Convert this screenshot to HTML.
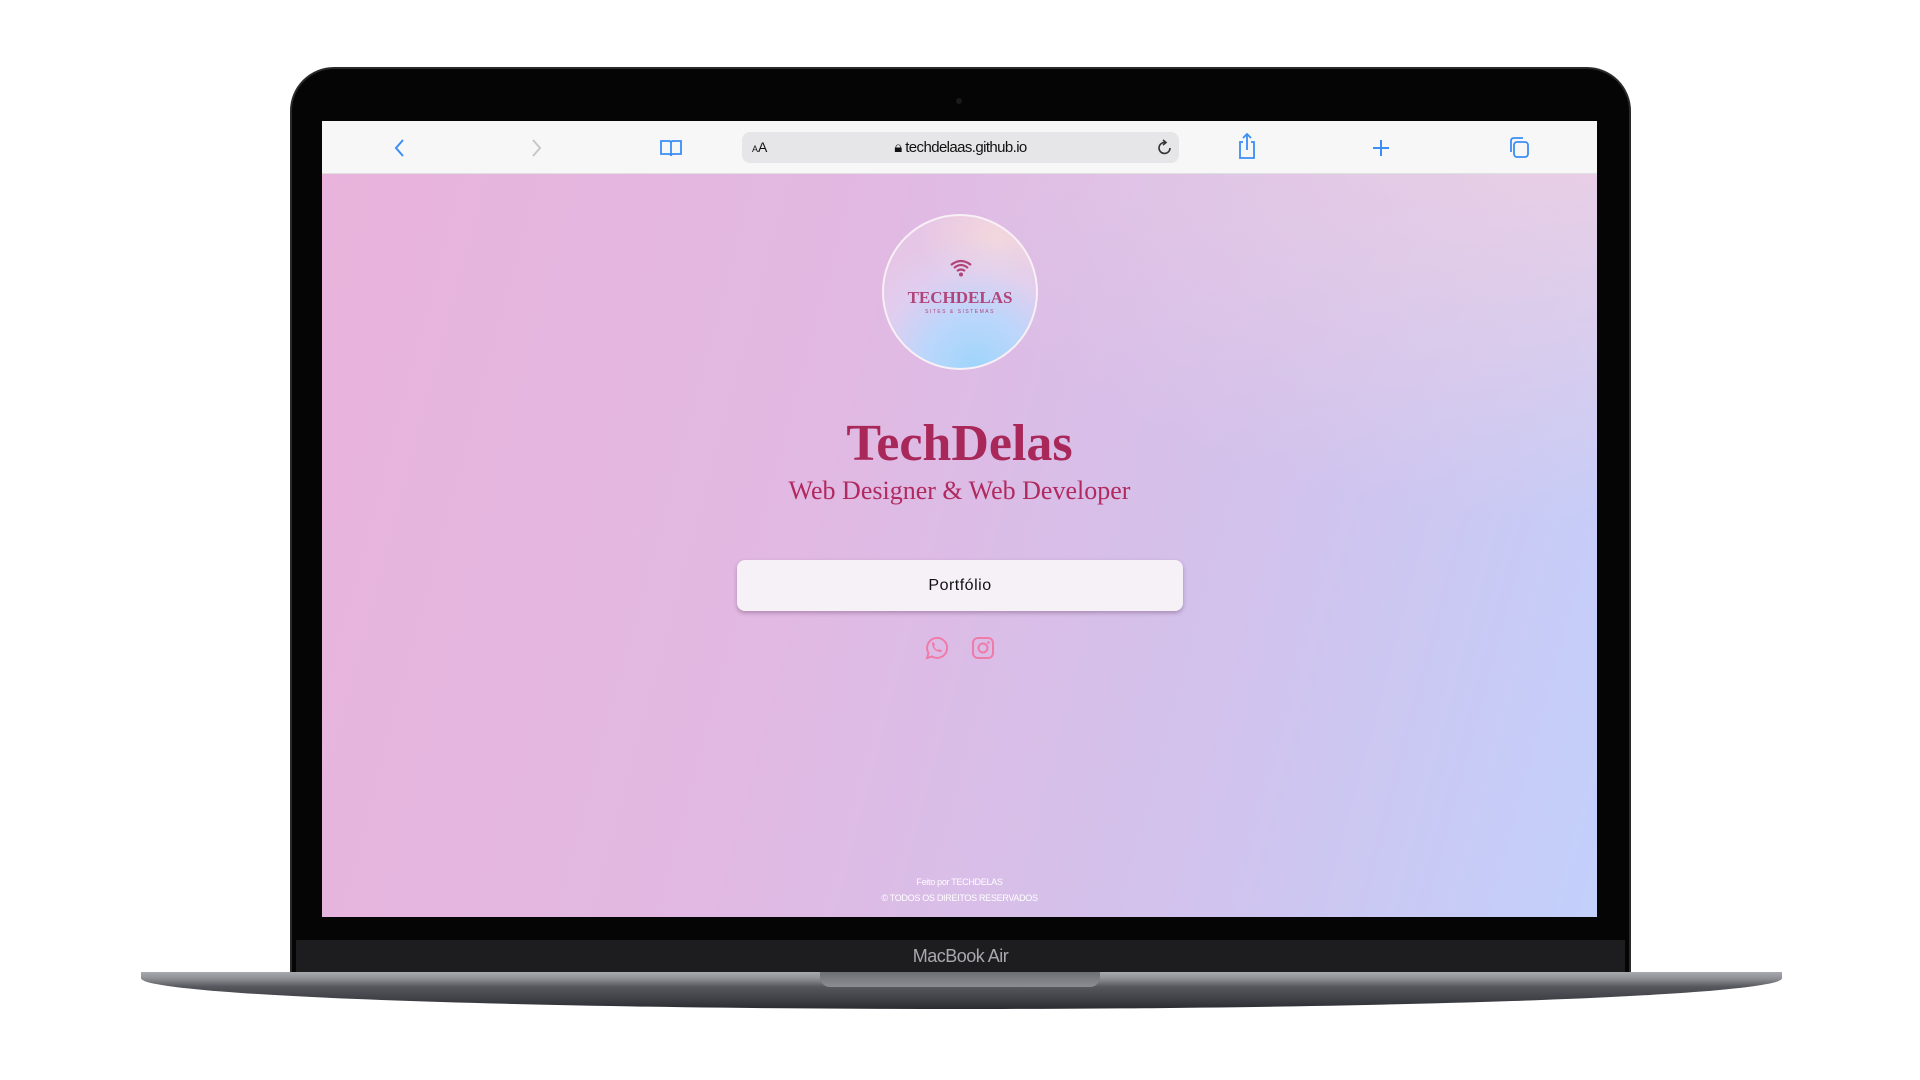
<!DOCTYPE html>
<html><head><meta charset="utf-8"><style>
*{margin:0;padding:0;box-sizing:border-box}
body{width:1920px;height:1080px;background:#fff;position:relative;overflow:hidden;font-family:"Liberation Sans",sans-serif}
.lid{position:absolute;left:290px;top:67px;width:1341px;height:910px;background:#050505;border-radius:44px 44px 6px 6px;border:2px solid #2a2a2a;}
.chin{position:absolute;left:296px;top:940px;width:1329px;height:34px;background:#1d1d1f;}
.chin span{position:absolute;left:0;right:0;top:6px;text-align:center;color:#a9a9ad;font-size:18px;letter-spacing:-0.5px}
.base{position:absolute;left:141px;top:972px;width:1641px;height:37px;background:linear-gradient(#a9aab0 0,#8e8f95 18%,#56575d 40%,#3b3c42 80%,#2a2b30 100%);border-radius:0 0 60% 60%/0 0 100% 100%}
.notch{position:absolute;left:820px;top:972px;width:280px;height:15px;background:linear-gradient(#6e6f74,#8c8d92);border-radius:0 0 10px 10px}
.screen{position:absolute;left:322px;top:121px;width:1275px;height:796px;overflow:hidden;
background:radial-gradient(ellipse 700px 400px at 100% 0%,rgba(240,208,226,.9),rgba(240,208,226,0)),linear-gradient(105deg,#e9b3dc 0%,#e1b9e2 40%,#d2c2ec 70%,#c2d0fb 100%)}
.bar{position:absolute;left:0;top:0;width:100%;height:53px;background:#f7f7f7;border-bottom:1px solid #e0e0e0}
.url{position:absolute;left:420px;top:11px;width:437px;height:31px;background:#e6e6e8;border-radius:8px}
.url .t{position:absolute;left:0;right:0;top:7px;text-align:center;font-size:15px;color:#111;letter-spacing:-0.6px}
.url .aa{position:absolute;left:10px;top:7px;font-size:14px;color:#111}
.ic{position:absolute;top:14px}
.logo{position:absolute;left:560px;top:93px;width:156px;height:156px;border-radius:50%;border:2px solid #f8f0f6;
background:radial-gradient(circle at 60% 100%,#9fd5fb 0,#bcd6fb 30%,rgba(220,210,245,.6) 55%,rgba(0,0,0,0) 75%),radial-gradient(circle at 75% 15%,#f3d8dc 0,rgba(243,216,220,0) 45%),#e6c6e6}
.logo .n{position:absolute;left:0;right:0;top:72px;text-align:center;font-family:"Liberation Serif",serif;font-weight:bold;color:#b0457a;font-size:17px;letter-spacing:0px}
.logo .s{position:absolute;left:0;right:0;top:93px;text-align:center;font-size:5px;color:#b0457a;letter-spacing:1.5px}
h1{position:absolute;left:0;right:0;top:293px;text-align:center;font-family:"Liberation Serif",serif;font-weight:bold;font-size:52px;color:#a8285a;letter-spacing:0}
h2{position:absolute;left:0;right:0;top:355px;text-align:center;font-family:"Liberation Serif",serif;font-weight:normal;font-size:26px;color:#b02a60}
.btn{position:absolute;left:415px;top:439px;width:446px;height:51px;background:#f6f1f7;border-radius:8px;box-shadow:0 2px 4px rgba(80,40,80,.35);text-align:center;line-height:51px;font-size:16px;color:#111;letter-spacing:.5px}
.foot{position:absolute;left:0;right:0;text-align:center;color:#fff;font-size:9px;letter-spacing:-0.3px}
</style></head><body>
<div class="lid"></div>
<div class="chin"><span>MacBook Air</span></div>
<div style="position:absolute;left:956px;top:98px;width:6px;height:6px;border-radius:50%;background:#1a1a1a"></div>
<div class="base"></div>
<div class="notch"></div>
<div class="screen">
 <div class="bar">
  <svg class="ic" style="left:70px" width="16" height="26" viewBox="0 0 16 26"><path d="M11 5 L4 13 L11 21" fill="none" stroke="#3a8ef5" stroke-width="2"/></svg>
  <svg class="ic" style="left:206px" width="16" height="26" viewBox="0 0 16 26"><path d="M5 5 L12 13 L5 21" fill="none" stroke="#c8c8c8" stroke-width="2"/></svg>
  <svg class="ic" style="left:337px" width="24" height="26" viewBox="0 0 24 26"><path d="M2 6 H10 Q12 6 12 8 V21 Q12 19 10 19 H2 Z M22 6 H14 Q12 6 12 8 V21 Q12 19 14 19 H22 Z" fill="none" stroke="#3a8ef5" stroke-width="1.8"/></svg>
  <div class="url"><span class="aa"><small style="font-size:9px">A</small>A</span><div class="t">🔒︎ techdelaas.github.io</div>
   <svg style="position:absolute;right:4px;top:6px" width="20" height="20" viewBox="0 0 20 20"><path d="M15 10 A5.5 5.5 0 1 1 10 4.5" fill="none" stroke="#333" stroke-width="1.6"/><path d="M8 2 L11 4.5 L8 7" fill="none" stroke="#333" stroke-width="1.6"/></svg></div>
  <svg class="ic" style="left:915px;top:10px" width="20" height="30" viewBox="0 0 20 30"><path d="M6 11 H3 V27 H17 V11 H14 M10 19 V3 M6 7 L10 3 L14 7" fill="none" stroke="#3a8ef5" stroke-width="1.8"/></svg>
  <svg class="ic" style="left:1049px" width="20" height="26" viewBox="0 0 20 26"><path d="M10 5 V21 M2 13 H18" stroke="#3a8ef5" stroke-width="2"/></svg>
  <svg class="ic" style="left:1185px" width="24" height="26" viewBox="0 0 24 26"><rect x="7" y="7" width="14" height="15" rx="3" fill="none" stroke="#3a8ef5" stroke-width="1.8"/><path d="M4 17 V6 Q4 3 7 3 H16" fill="none" stroke="#3a8ef5" stroke-width="1.8"/></svg>
 </div>
 <div class="logo">
  <svg style="position:absolute;left:64px;top:42px" width="26" height="20" viewBox="0 0 26 20"><path d="M3 7 Q13 -1 23 7 M6 10 Q13 4 20 10 M9 13 Q13 10 17 13" fill="none" stroke="#b0457a" stroke-width="2.2"/><circle cx="13" cy="16.5" r="2" fill="#b0457a"/></svg>
  <div class="n">TECHDELAS</div><div class="s">SITES &amp; SISTEMAS</div>
 </div>
 <h1>TechDelas</h1>
 <h2>Web Designer &amp; Web Developer</h2>
 <div class="btn">Portfólio</div>
 <svg style="position:absolute;left:601px;top:514px" width="26" height="26" viewBox="0 0 26 26"><path d="M4 23 L5.5 18 A10 10 0 1 1 9 21.5 Z" fill="none" stroke="#f07aa8" stroke-width="2"/><path d="M9 9 Q9 7 10.5 7 L12 10 L11 11 Q12 14 15 15 L16 14 L19 15.5 Q19 17 17 17 Q10 16 9 9Z" fill="#f07aa8"/></svg>
 <svg style="position:absolute;left:649px;top:515px" width="24" height="24" viewBox="0 0 24 24"><rect x="2" y="2" width="20" height="20" rx="5" fill="none" stroke="#f07aa8" stroke-width="2"/><circle cx="12" cy="12" r="4.5" fill="none" stroke="#f07aa8" stroke-width="2"/><circle cx="17.5" cy="6.5" r="1.3" fill="#f07aa8"/></svg>
 <div class="foot" style="top:756px">Feito por TECHDELAS</div>
 <div class="foot" style="top:772px">© TODOS OS DIREITOS RESERVADOS</div>
</div>
</body></html>
